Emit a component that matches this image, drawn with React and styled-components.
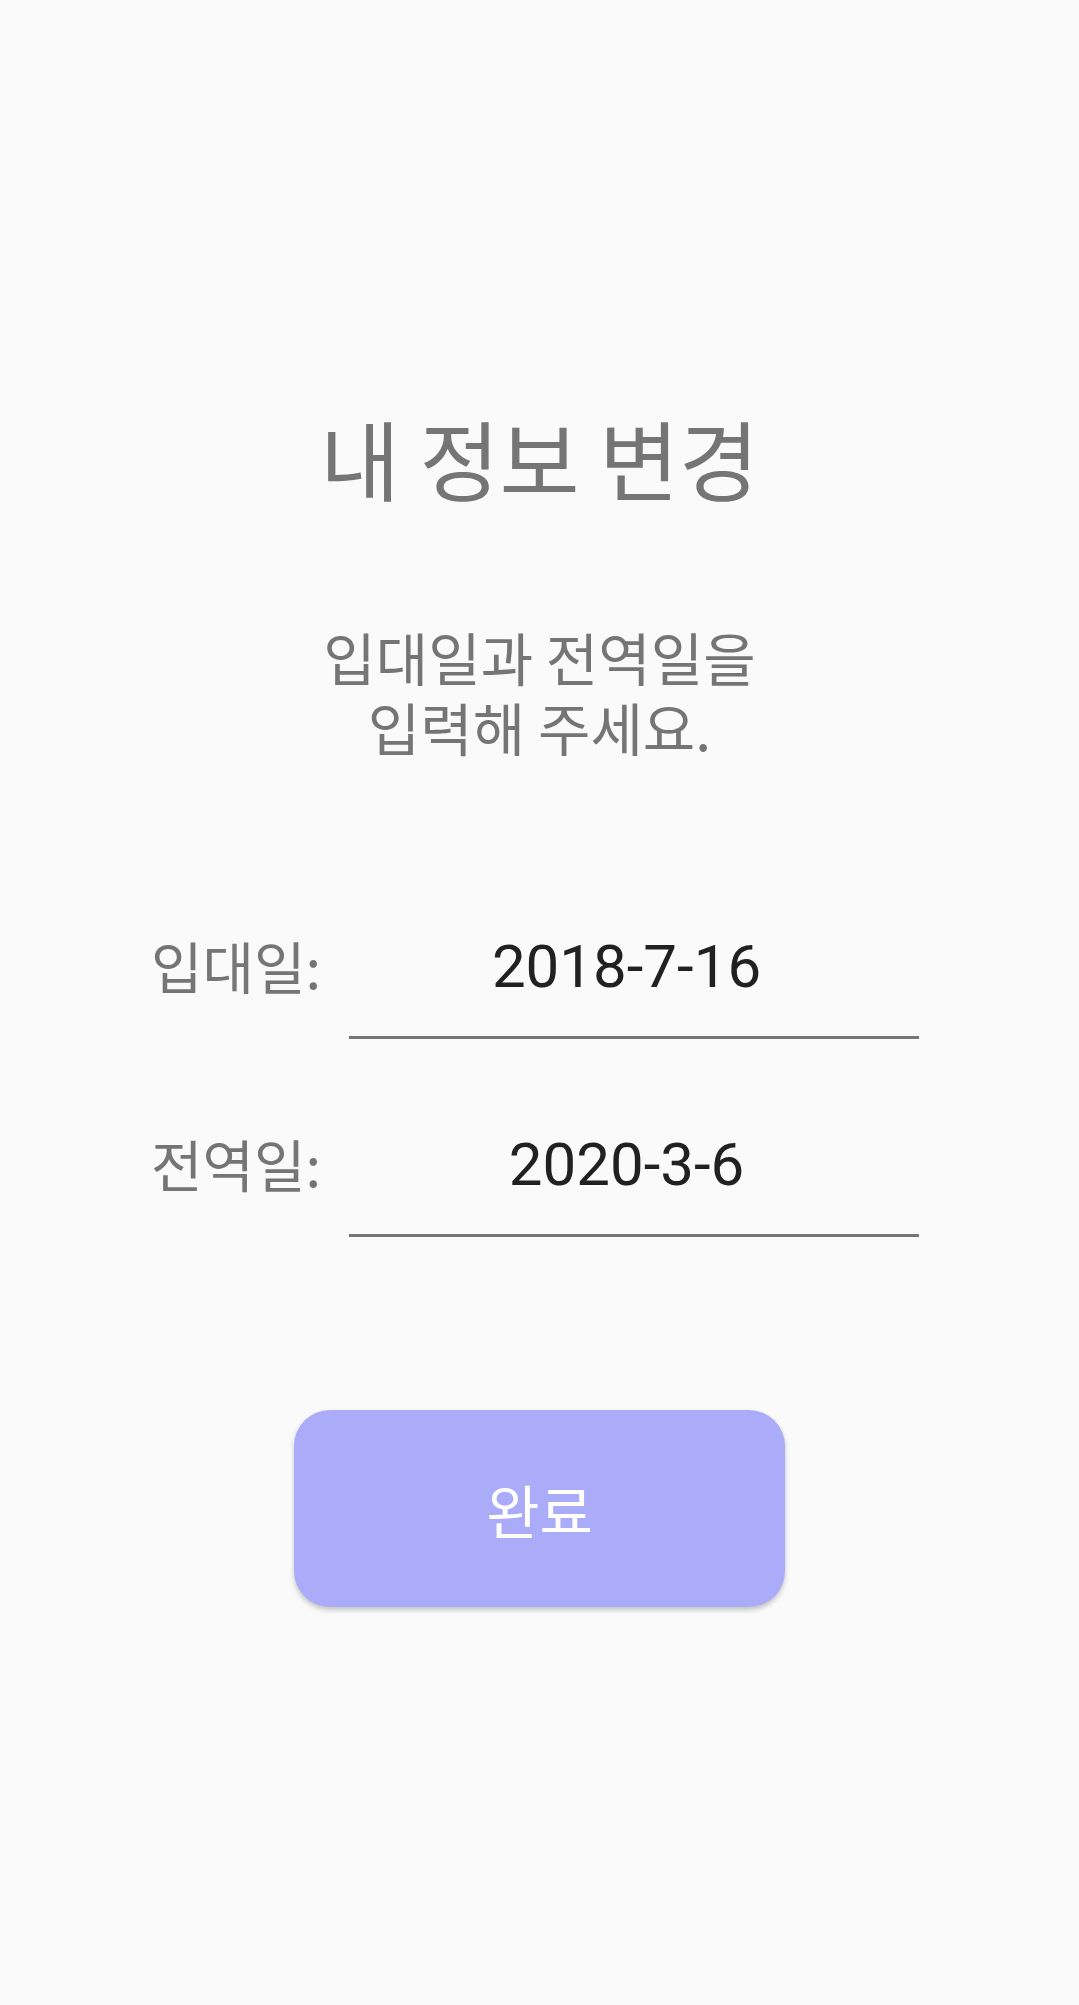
import React from "react";
import styled, { createGlobalStyle } from "styled-components";

const Global = createGlobalStyle`
  html, body { margin: 0; padding: 0; background: #fafafa; }
  body { font-family: Roboto, "Noto Sans CJK KR", sans-serif; }
`;

const KR = `"Noto Sans CJK KR", "Noto Sans", sans-serif`;

const Page = styled.div`
  min-height: 2005px;
  background: #fafafa;
  display: flex;
  flex-direction: column;
  align-items: center;
  box-sizing: border-box;
  padding-top: 397px;
`;

const Title = styled.h1`
  margin: 0;
  font-family: ${KR};
  font-weight: 400;
  font-size: 87px;
  line-height: 120px;
  color: #757575;
  text-align: center;
`;

const Subtitle = styled.p`
  margin: 104px 0 0;
  font-family: ${KR};
  font-size: 57px;
  line-height: 70px;
  color: #757575;
  text-align: center;
`;

const Form = styled.div`
  align-self: stretch;
  display: flex;
  flex-direction: column;
  gap: 82px;
  margin-top: 162px;
  padding-left: 151px;
`;

const Row = styled.div`
  display: grid;
  grid-template-columns: 198px 570px;
  align-items: start;
`;

const Label = styled.label`
  font-family: ${KR};
  font-size: 56px;
  line-height: 84px;
  color: #757575;
  white-space: nowrap;
`;

const Field = styled.div`
  font-family: Roboto, sans-serif;
  font-size: 60px;
  line-height: 88px;
  height: 88px;
  color: #212121;
  text-align: center;
  padding: 0 15px 25px 0;
  border-bottom: 3px solid #757575;
`;

const Button = styled.button`
  margin-top: 173px;
  width: 491px;
  height: 197px;
  border: none;
  border-radius: 36px;
  background: #aaacfa;
  color: #ffffff;
  font-family: ${KR};
  font-size: 58px;
  box-shadow: 0 3px 5px rgba(0, 0, 0, 0.22);
  cursor: pointer;
`;

const rows = [
  { label: "입대일:", value: "2018-7-16" },
  { label: "전역일:", value: "2020-3-6" },
];

export default function App() {
  return (
    <>
      <Global />
      <Page>
        <Title>내 정보 변경</Title>
        <Subtitle>
          입대일과 전역일을
          <br />
          입력해 주세요.
        </Subtitle>
        <Form>
          {rows.map((r) => (
            <Row key={r.label}>
              <Label>{r.label}</Label>
              <Field>{r.value}</Field>
            </Row>
          ))}
        </Form>
        <Button>완료</Button>
      </Page>
    </>
  );
}
